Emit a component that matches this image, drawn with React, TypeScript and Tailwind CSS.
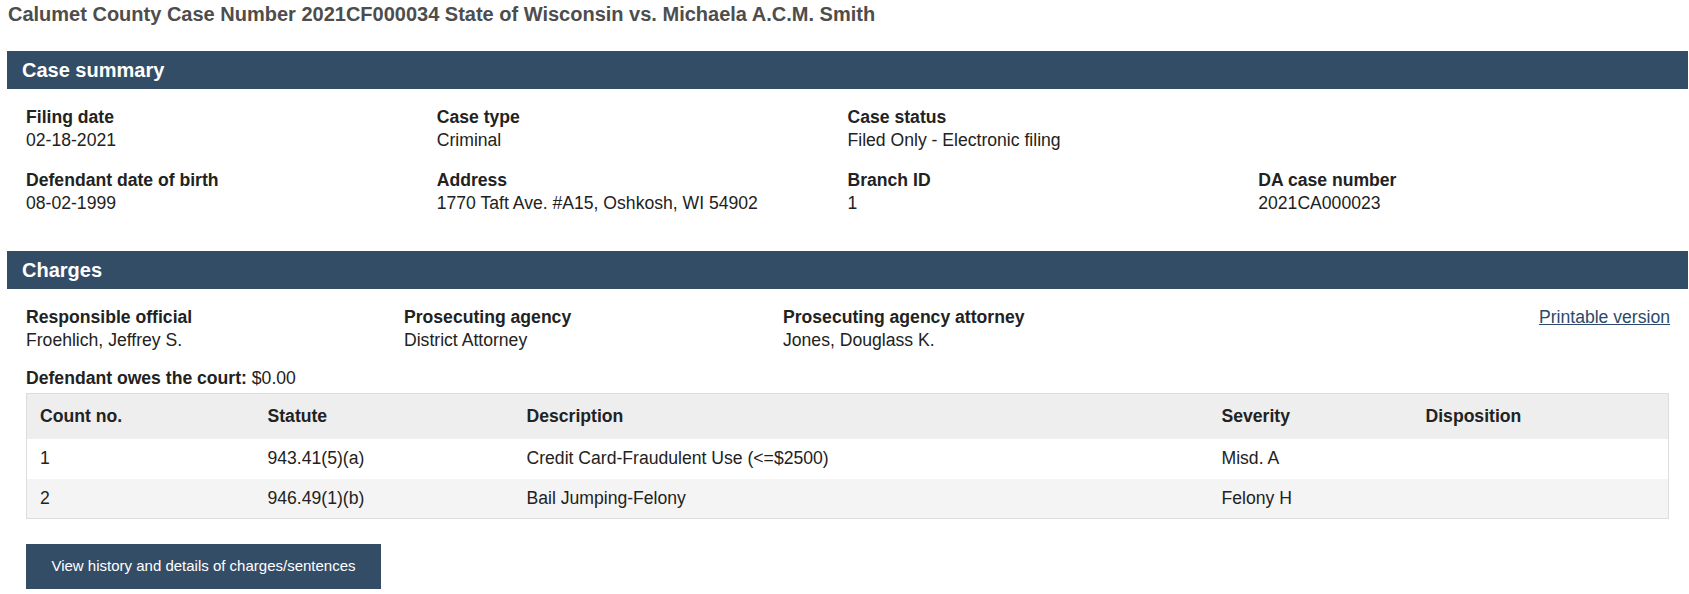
import React from "react";

const font = { fontFamily: '"Liberation Sans", Arial, sans-serif' };

function Field({ label, value }: { label: string; value: string }) {
  return (
    <div className="text-[17.6px] leading-[23px] text-[#222]">
      <div className="font-bold">{label}</div>
      <div>{value}</div>
    </div>
  );
}

export default function App() {
  const rows = [
    ["1", "943.41(5)(a)", "Credit Card-Fraudulent Use (<=$2500)", "Misd. A", ""],
    ["2", "946.49(1)(b)", "Bail Jumping-Felony", "Felony H", ""],
  ];
  return (
    <div className="w-full bg-white" style={font}>
      <h1 className="pl-[8px] pt-[3px] text-[20px] leading-[22px] font-bold text-[#4d4d4d]">
        Calumet County Case Number 2021CF000034 State of Wisconsin vs. Michaela A.C.M. Smith
      </h1>
      <div className="pl-[7px] pr-[1px] pt-[26px]">
        <section>
          <div className="flex h-[38px] items-center bg-[#344d66] pl-[15px] text-[20px] font-bold text-white">
            Case summary
          </div>
          <div className="grid grid-cols-4 gap-y-[17px] px-[19px] pt-[17px] pb-[36px]">
            <Field label="Filing date" value="02-18-2021" />
            <Field label="Case type" value="Criminal" />
            <Field label="Case status" value="Filed Only - Electronic filing" />
            <div />
            <Field label="Defendant date of birth" value="08-02-1999" />
            <Field label="Address" value="1770 Taft Ave. #A15, Oshkosh, WI 54902" />
            <Field label="Branch ID" value="1" />
            <Field label="DA case number" value="2021CA000023" />
          </div>
        </section>
        <section>
          <div className="flex h-[38px] items-center bg-[#344d66] pl-[15px] text-[20px] font-bold text-white">
            Charges
          </div>
          <div className="pl-[19px] pr-[18px] pt-[17px]">
            <div className="flex items-start">
              <div className="w-[378px]">
                <Field label="Responsible official" value="Froehlich, Jeffrey S." />
              </div>
              <div className="w-[379px]">
                <Field label="Prosecuting agency" value="District Attorney" />
              </div>
              <div className="flex-1">
                <Field label="Prosecuting agency attorney" value="Jones, Douglass K." />
              </div>
              <a className="text-[17.6px] leading-[23px] text-[#2c4a6b] underline" href="#">
                Printable version
              </a>
            </div>
            <div className="mt-[15px] text-[17.6px] leading-[23px] text-[#222]">
              <span className="font-bold">Defendant owes the court:</span> $0.00
            </div>
            <table className="mt-[3px] w-[1643px] table-fixed border-collapse border border-[#dddddd] text-[17.6px] text-[#222]">
              <colgroup>
                <col className="w-[228px]" />
                <col className="w-[259px]" />
                <col className="w-[695px]" />
                <col className="w-[204px]" />
                <col />
              </colgroup>
              <thead>
                <tr className="h-[45px] bg-[#eeeeee] text-left">
                  <th className="pl-[13px] font-bold">Count no.</th>
                  <th className="pl-[13px] font-bold">Statute</th>
                  <th className="pl-[13px] font-bold">Description</th>
                  <th className="pl-[13px] font-bold">Severity</th>
                  <th className="pl-[13px] font-bold">Disposition</th>
                </tr>
              </thead>
              <tbody>
                {rows.map((r, i) => (
                  <tr key={i} className={i % 2 === 0 ? "h-[40px] bg-white" : "h-[40px] bg-[#f4f4f4]"}>
                    {r.map((c, j) => (
                      <td key={j} className="pl-[13px]">
                        {c}
                      </td>
                    ))}
                  </tr>
                ))}
              </tbody>
            </table>
            <button className="mt-[25px] flex h-[45px] w-[355px] items-center justify-center bg-[#344d66] text-[15px] text-white">
              View history and details of charges/sentences
            </button>
          </div>
        </section>
      </div>
    </div>
  );
}
